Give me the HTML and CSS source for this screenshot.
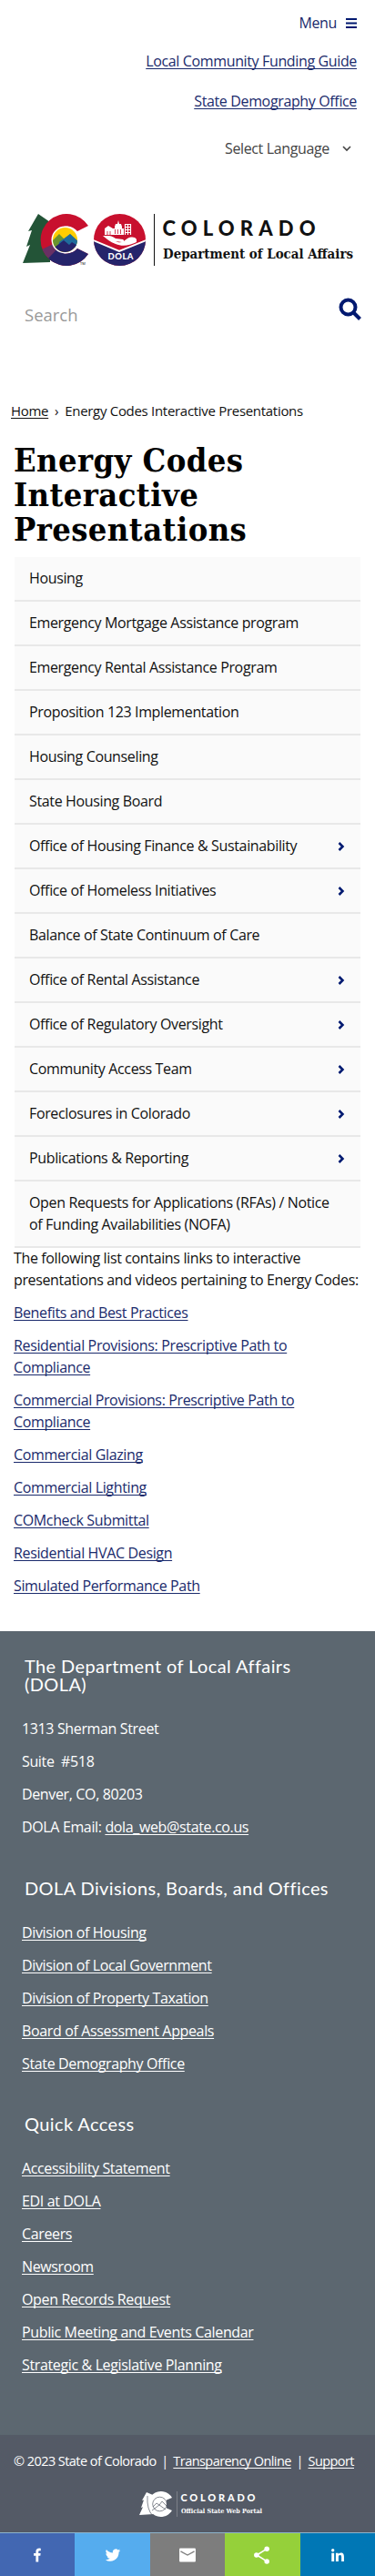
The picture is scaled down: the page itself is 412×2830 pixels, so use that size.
FILE: index.html
```html
<!DOCTYPE html>
<html lang="en">
<head>
<meta charset="utf-8">
<meta name="viewport" content="width=device-width, initial-scale=1">
<title>Energy Codes Interactive Presentations</title>
<link rel="stylesheet" href="styles.css">
</head>
<body>
<header class="top">
  <a class="menu" href="#">Menu
    <svg class="bars" viewBox="0 0 12 11"><path d="M0 1h12M0 5.500h12M0 10h12"/></svg>
  </a>
  <a class="toplink" href="#">Local Community Funding Guide</a>
  <a class="toplink" href="#">State Demography Office</a>
  <div class="language">Select Language
    <svg class="caret" viewBox="0 0 10 7"><path d="M1 1l4 4 4-4"/></svg>
  </div>
</header>

<svg class="logo" viewBox="0 0 412 64" role="img" aria-label="Colorado Department of Local Affairs">
  <defs>
    <clipPath id="c-shape"><path d="M97 16A28.500 28.500 0 1 0 97 47L85 41A15 15 0 1 1 85 22Z"/></clipPath>
    <clipPath id="sun"><circle cx="71.500" cy="31.500" r="13.500"/></clipPath>
    <clipPath id="seal"><circle cx="131.500" cy="31.500" r="28.500"/></clipPath>
  </defs>
  <path fill="#235437" d="M42 3L31 22l4-1-6 18 4-2-8 20 30-1V12Z"/>
  <g clip-path="url(#c-shape)">
    <path fill="#c8102e" d="M40 0h62v64H40z"/>
    <path fill="#683064" d="M40 45l31-15-17 34H40z"/>
    <path fill="#25246b" d="M50 55l22-23h30v32H50z"/>
  </g>
  <circle cx="71.500" cy="31.500" r="15" fill="#fff"/>
  <g clip-path="url(#sun)">
    <path fill="#ffcd00" d="M57 17h30v30H57z"/>
    <path fill="#69942f" d="M57 33l8-8 6 6 6-6 10 10v5H57z"/>
    <path fill="#1f6c9c" d="M65 34l12-9 10 9v6H64z"/>
    <path fill="#25246b" d="M57 42l13-10 6 5 3-3 8 5v10H57z"/>
  </g>
  <text x="88" y="59" class="tm">TM</text>
  <g clip-path="url(#seal)">
    <path fill="#c8102e" d="M103 3h57v57h-57z"/>
    <path fill="#25246b" stroke="#fff" stroke-width="2" d="M100 31l31 13 32-13v33h-63z"/>
  </g>
  <g fill="#fff">
    <path d="M113 27c5 0 9-1 14 3l8 1c2 1 1 3-1 3l-7-1c6 3 9 0 13-3 4-2 8-2 10 1v3c-8 4-16 5-23 2-6-2-10-6-14-9z"/>
    <path d="M115 19l4-3 5 3v7h-9zM126 17l1-3h2l1-4 1 4h2l1 3v8h-8zM124 19h12v7h-12z"/>
  </g>
  <path d="M137 14.500h7M137 17.500h7M137 20.500h7M137 23.500h7M137.500 14v12M140.500 14v12M143.500 14v12" stroke="#fff" stroke-width="1.200"/>
  <path d="M126.500 20v5M129.500 20v5M132.500 20v5M118 22v4M121 22v4" stroke="#c8102e" stroke-width=".8"/>
  <text x="118.500" y="53" class="dola" textLength="28">DOLA</text>
  <path d="M169.500 3v57" stroke="#111"/>
  <text x="178.500" y="27" class="brand" textLength="168">COLORADO</text>
  <text x="179" y="52" class="dept" textLength="209" lengthAdjust="spacingAndGlyphs">Department of Local Affairs</text>
</svg>

<form class="search">
  <span>Search</span>
  <svg class="lens" viewBox="0 0 26 26"><circle cx="10.500" cy="10.500" r="8"/><path d="M16.500 16.500l7 7"/></svg>
</form>

<nav class="crumbs"><a href="#">Home</a><span class="sep">›</span><span>Energy Codes Interactive Presentations</span></nav>

<main>
  <h1>Energy Codes<br>Interactive<br>Presentations</h1>
  <ul class="side">
    <li>Housing</li>
    <li>Emergency Mortgage Assistance program</li>
    <li>Emergency Rental Assistance Program</li>
    <li>Proposition 123 Implementation</li>
    <li>Housing Counseling</li>
    <li>State Housing Board</li>
    <li>Office of Housing Finance &amp; Sustainability<svg class="chev" viewBox="0 0 8 10"><path d="M1.500 1l4 4-4 4"/></svg></li>
    <li>Office of Homeless Initiatives<svg class="chev" viewBox="0 0 8 10"><path d="M1.500 1l4 4-4 4"/></svg></li>
    <li>Balance of State Continuum of Care</li>
    <li>Office of Rental Assistance<svg class="chev" viewBox="0 0 8 10"><path d="M1.500 1l4 4-4 4"/></svg></li>
    <li>Office of Regulatory Oversight<svg class="chev" viewBox="0 0 8 10"><path d="M1.500 1l4 4-4 4"/></svg></li>
    <li>Community Access Team<svg class="chev" viewBox="0 0 8 10"><path d="M1.500 1l4 4-4 4"/></svg></li>
    <li>Foreclosures in Colorado<svg class="chev" viewBox="0 0 8 10"><path d="M1.500 1l4 4-4 4"/></svg></li>
    <li>Publications &amp; Reporting<svg class="chev" viewBox="0 0 8 10"><path d="M1.500 1l4 4-4 4"/></svg></li>
    <li>Open Requests for Applications (RFAs) / Notice<br>of Funding Availabilities (NOFA)</li>
  </ul>
  <div class="content">
    <p>The following list contains links to interactive<br>presentations and videos pertaining to Energy Codes:</p>
    <p><a href="#">Benefits and Best Practices</a></p>
    <p><a href="#">Residential Provisions: Prescriptive Path to<br>Compliance</a></p>
    <p><a href="#">Commercial Provisions: Prescriptive Path to<br>Compliance</a></p>
    <p><a href="#">Commercial Glazing</a></p>
    <p><a href="#">Commercial Lighting</a></p>
    <p><a href="#">COMcheck Submittal</a></p>
    <p><a href="#">Residential HVAC Design</a></p>
    <p><a href="#">Simulated Performance Path</a></p>
  </div>
</main>

<footer>
  <div class="columns">
    <section>
      <h2>The Department of Local Affairs<br>(DOLA)</h2>
      <p>1313 Sherman Street</p>
      <p>Suite &nbsp;#518</p>
      <p>Denver, CO, 80203</p>
      <p>DOLA Email: <a href="#">dola_web@state.co.us</a></p>
    </section>
    <section>
      <h2>DOLA Divisions, Boards, and Offices</h2>
      <p><a href="#">Division of Housing</a></p>
      <p><a href="#">Division of Local Government</a></p>
      <p><a href="#">Division of Property Taxation</a></p>
      <p><a href="#">Board of Assessment Appeals</a></p>
      <p><a href="#">State Demography Office</a></p>
    </section>
    <section>
      <h2>Quick Access</h2>
      <p><a href="#">Accessibility Statement</a></p>
      <p><a href="#">EDI at DOLA</a></p>
      <p><a href="#">Careers</a></p>
      <p><a href="#">Newsroom</a></p>
      <p><a href="#">Open Records Request</a></p>
      <p><a href="#">Public Meeting and Events Calendar</a></p>
      <p><a href="#">Strategic &amp; Legislative Planning</a></p>
    </section>
  </div>
  <div class="legal">
    <div class="copy"><span>© 2023 State of Colorado</span><span>|</span><a href="#">Transparency Online</a><span>|</span><a href="#">Support</a></div>
    <svg class="portal" viewBox="0 0 144 28" role="img" aria-label="Colorado Official State Web Portal">
      <path fill="#fff" d="M8 1L3 10l2-.5L2 18l2-.7L0 26l16-1L15 4z"/>
      <path fill="#fff" d="M36 7A14 14 0 1 0 36 21L30 18.500V9.500z"/>
      <circle cx="22" cy="14" r="7.500" fill="#fff"/>
      <g fill="none" stroke="#545a66" stroke-width=".7"><circle cx="22.500" cy="14" r="7.800"/><path d="M15 17l4-4 3 2 3-4 5 5M14 21l8-6 7 5M9 5Q8 20 15 27"/></g>
      <path d="M41.500 0v28" stroke="#868a92" stroke-width=".8"/>
      <text x="45.500" y="11" class="p1" textLength="82">COLORADO</text>
      <text x="46" y="24" class="p2" textLength="89" lengthAdjust="spacingAndGlyphs">Official State Web Portal</text>
    </svg>
  </div>
  <div class="share">
    <a class="fb" href="#"><svg viewBox="0 0 32 32"><path fill="#fff" d="M17.800 27V17h3l.5-4h-3.500v-2.300c0-1.100.5-1.700 1.800-1.700h1.900V5.300C20.800 5.100 20 5 19 5c-3.300 0-5.300 2-5.300 5.200V13h-3.400v4h3.400v10z"/></svg></a>
    <a class="tw" href="#"><svg viewBox="0 0 32 32"><path fill="#fff" d="M28 8.600a9.900 9.900 0 0 1-2.800.8 4.900 4.900 0 0 0 2.100-2.700 9.900 9.900 0 0 1-3.100 1.200 4.900 4.900 0 0 0-8.400 4.500A14 14 0 0 1 5.700 7.200a4.900 4.900 0 0 0 1.500 6.600 4.900 4.900 0 0 1-2.200-.6v.1a4.900 4.900 0 0 0 3.900 4.800 4.900 4.900 0 0 1-2.200.1 4.900 4.900 0 0 0 4.600 3.400A9.900 9.900 0 0 1 4 23.600a14 14 0 0 0 21.500-12.400A10 10 0 0 0 28 8.600z"/></svg></a>
    <a class="em" href="#"><svg viewBox="0 0 32 32"><path fill="#fff" d="M3 7c0-1 .8-1.800 1.800-1.800h22.400c1 0 1.800.8 1.800 1.800v18c0 1-.8 1.800-1.800 1.800H4.800c-1 0-1.800-.8-1.800-1.800z"/><path fill="none" stroke="#808080" stroke-width="2" d="M5 10l11 6 11-6"/></svg></a>
    <a class="sh" href="#"><svg viewBox="0 0 32 32"><g fill="#fff"><circle cx="7" cy="16" r="4"/><circle cx="23.500" cy="6" r="4"/><circle cx="23.500" cy="26" r="4"/></g><path fill="none" stroke="#fff" stroke-width="2.400" d="M23.500 6l-16 10 16 10"/></svg></a>
    <a class="li" href="#"><svg viewBox="0 0 32 32"><path fill="#fff" d="M6.200 12.600h4.200v13.500H6.200zM8.300 5.900a2.400 2.400 0 1 1 0 4.900 2.400 2.400 0 0 1 0-4.900M13 12.600h4v1.800h.1c.6-1 1.900-2.200 4-2.200 4.200 0 5 2.800 5 6.500v7.400H22v-6.600c0-1.500 0-3.600-2.200-3.600s-2.500 1.700-2.500 3.500v6.700H13z"/></svg></a>
  </div>
</footer>
</body>
</html>
```
FILE: styles.css
```css
* { box-sizing: border-box; }
body {
  margin: 0;
  font: 16px/24px "Open Sans", "Noto Sans", sans-serif;
  letter-spacing: -0.36px;
  color: #111;
  background: #fff;
}
a { color: #1a2a6c; text-underline-offset: 2px; text-decoration-thickness: 1px; text-decoration-skip-ink: none; }
ul, p, h1, h2 { margin: 0; padding: 0; }

.top { display: flex; flex-direction: column; align-items: flex-end; padding: 13px 20px 0 0; }
.menu { display: flex; align-items: center; gap: 10px; text-decoration: none; }
.bars { width: 12px; height: 11px; stroke: #001970; stroke-width: 2; }
.toplink { margin-top: 18px; }
.toplink + .toplink { margin-top: 20px; }
.language { display: flex; align-items: center; gap: 14px; margin-top: 28px; padding-right: 6px; color: #444; }
.caret { width: 10px; height: 7px; fill: none; stroke: #444; stroke-width: 1.6; }

.logo { display: block; width: 412px; height: 64px; margin-top: 57px; letter-spacing: 0; }
.tm { font: 4px "Open Sans", sans-serif; }
.dola { font: 900 9.500px Lato, sans-serif; fill: #fff; }
.brand { font: 900 22px Lato, sans-serif; fill: #111; }
.dept { font: bold 14px "DejaVu Serif", serif; fill: #111; }

.search { display: flex; justify-content: space-between; padding: 31px 14px 0 27px; height: 143px; }
.search span { font-size: 18.500px; line-height: 28px; letter-spacing: 0; color: #999; padding-top: 5px; }
.lens { width: 26px; height: 26px; fill: none; stroke: #001970; stroke-width: 4; }

.crumbs { display: flex; padding-left: 12px; font-size: 15px; letter-spacing: -.3px; height: 47px; white-space: nowrap; }
.crumbs a { color: #111; }
.sep { width: 18px; text-align: center; }

main { padding: 0 16px; }
h1 { font: bold 36px/38px "DejaVu Serif Condensed", "DejaVu Serif", serif; letter-spacing: .4px; color: #000; height: 126px; margin-left: -1px; white-space: nowrap; }
.side { list-style: none; }
.side li { position: relative; padding: 11px 16px 12px; background: #fafafa; border-bottom: 2px solid #e8e8e8; white-space: nowrap; }
.chev { position: absolute; right: 17px; top: 19px; width: 8px; height: 10px; fill: none; stroke: #001970; stroke-width: 2.500; }
.content { display: flex; flex-direction: column; gap: 12px; height: 422px; margin: -1px 0 0 -1px; white-space: nowrap; }

footer { color: #fff; }
footer a { color: #fff; }
.columns { height: 883px; background: #5c6770; padding: 28px 24px 0; }
.columns section { display: flex; flex-direction: column; gap: 12px; margin-bottom: 44.500px; }
h2 { font: 20px/20px Lato, sans-serif; letter-spacing: .4px; padding: 0 0 15px 3px; white-space: nowrap; }
.legal { height: 107px; background: #545a66; padding-top: 17px; }
.copy { display: flex; justify-content: space-between; padding: 0 23px 0 15px; font-size: 14.500px; letter-spacing: -.56px; white-space: nowrap; }
.portal { display: block; width: 144px; height: 28px; margin: 21px 0 0 153px; letter-spacing: 0; }
.p1 { font: 900 11px Lato, sans-serif; fill: #fff; }
.p2 { font: bold 7px "DejaVu Serif", serif; fill: #fff; }
.share { display: flex; height: 49px; border-top: 1px solid #8db4cc; }
.share a { flex: 1; display: flex; align-items: center; justify-content: center; }
.share svg { width: 22px; height: 22px; }
.fb { background: #4267b2; }
.tw { background: #55acee; }
.em { background: #7d7d7d; }
.sh { background: #95d03a; }
.li { background: #0077b5; }
```
